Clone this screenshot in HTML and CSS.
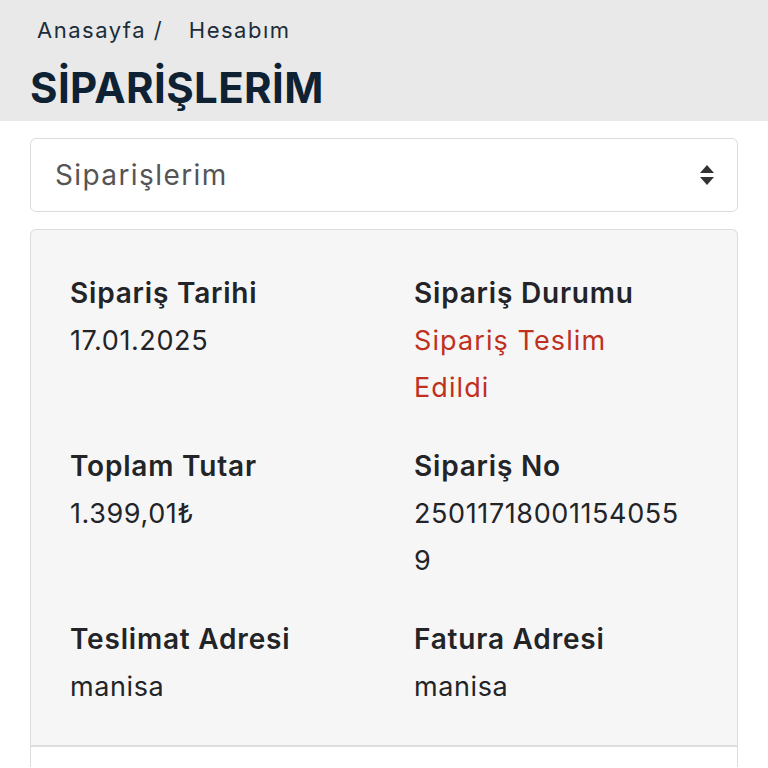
FILE: index.html
```html
<!DOCTYPE html>
<html lang="tr">
  <head>
    <meta charset="utf-8" />
    <meta name="viewport" content="width=device-width, initial-scale=1" />
    <title>Siparişlerim</title>
    <link rel="stylesheet" href="styles.css">
  </head>
  <body>
    <div class="page-header">
      <div class="breadcrumb">
        <span>Anasayfa /</span>
        <span class="crumb-current">Hesabım</span>
      </div>
      <h1 class="page-title">SİPARİŞLERİM</h1>
    </div>
    <div class="content">
      <div class="select-box">
        <span>Siparişlerim</span>
        <svg class="select-arrows" width="16" height="22" viewBox="0 0 16 22">
          <path d="M8 1 L15 9 L1 9 Z" fill="#333" />
          <path d="M1 13 L15 13 L8 21 Z" fill="#333" />
        </svg>
      </div>
      <div class="order-card">
        <div class="order-body">
          <div class="order-item">
            <div class="order-label">Sipariş Tarihi</div>
            <div class="order-value">17.01.2025</div>
          </div>
          <div class="order-item">
            <div class="order-label">Sipariş Durumu</div>
            <div class="order-value status">Sipariş Teslim Edildi</div>
          </div>
          <div class="order-item">
            <div class="order-label">Toplam Tutar</div>
            <div class="order-value">1.399,01₺</div>
          </div>
          <div class="order-item">
            <div class="order-label">Sipariş No</div>
            <div class="order-value order-no">250117180011540559</div>
          </div>
          <div class="order-item">
            <div class="order-label">Teslimat Adresi</div>
            <div class="order-value">manisa</div>
          </div>
          <div class="order-item">
            <div class="order-label">Fatura Adresi</div>
            <div class="order-value">manisa</div>
          </div>
        </div>
        <div class="order-footer"></div>
      </div>
    </div>
  </body>
</html>
```

FILE: styles.css
```css
html {
  height: 100%;
  width: 100%;
}

body {
  margin: 0;
  background-color: #ffffff;
  font-family: Inter, "Open Sans", sans-serif;
  color: #222428;
}

.page-header {
  background-color: #e9e9e9;
  padding: 14px 30px 5px;
}

.breadcrumb {
  padding-left: 7px;
  font-size: 22px;
  line-height: 32px;
  letter-spacing: 1.5px;
  color: #1b2d3b;
}

.crumb-current {
  margin-left: 18px;
}

.page-title {
  margin: 14px 0 0;
  font-size: 42px;
  font-weight: 700;
  line-height: 56px;
  letter-spacing: 0.4px;
  color: #0e2233;
}

.content {
  padding: 17px 30px 0;
}

.select-box {
  display: flex;
  justify-content: space-between;
  align-items: center;
  height: 72px;
  padding: 0 24px;
  border: 1px solid #dcdcdc;
  border-radius: 6px;
  font-size: 28px;
  letter-spacing: 1.4px;
  color: #555555;
}

.select-arrows {
  margin-right: -2px;
}

.order-card {
  margin-top: 17px;
  border: 1px solid #dcdcdc;
  border-bottom: none;
  border-radius: 6px 6px 0 0;
  background-color: #f6f6f6;
}

.order-body {
  display: grid;
  grid-template-columns: 344px 274px;
  row-gap: 32px;
  padding: 40px 39px 35px;
}

.order-label {
  font-size: 28px;
  font-weight: 600;
  line-height: 47px;
  letter-spacing: 0.8px;
}

.order-value {
  font-size: 27px;
  line-height: 47px;
  letter-spacing: 0.6px;
}

.status {
  color: #c0301e;
  letter-spacing: 1.1px;
}

.order-no {
  word-break: break-all;
}

.order-footer {
  height: 20px;
  border-top: 2px solid #dedede;
  background-color: #ffffff;
}
```
